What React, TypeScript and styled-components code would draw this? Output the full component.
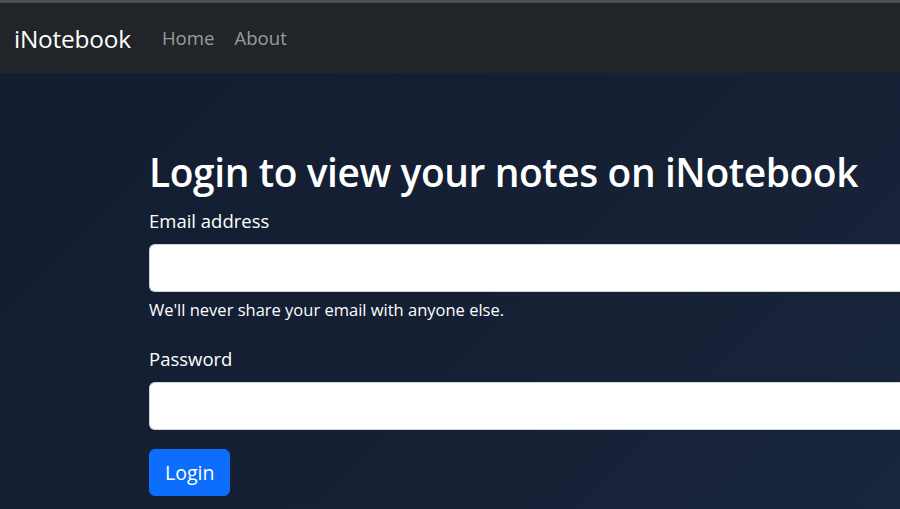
import React from "react";
import styled, { createGlobalStyle } from "styled-components";

const Global = createGlobalStyle`
  html, body { margin: 0; padding: 0; }
  body {
    width: 900px;
    height: 509px;
    overflow: hidden;
    font-family: "Open Sans", "Noto Sans", sans-serif;
    background: linear-gradient(135deg, #121d30 0%, #152035 55%, #19253a 100%);
    color: #fff;
  }
  * { box-sizing: border-box; }
`;

const Page = styled.div`
  display: flex;
  flex-direction: column;
  width: 900px;
  min-height: 509px;
`;

const Navbar = styled.nav`
  height: 73px;
  background: #212529;
  border-top: 3px solid #4d4e50;
  display: flex;
  align-items: center;
  padding: 0 14px;
`;

const Brand = styled.a`
  font-size: 24.4px;
  color: #fff;
  text-decoration: none;
  margin-right: 21px;
  letter-spacing: -0.2px;
`;

const NavLink = styled.a`
  font-size: 18.6px;
  color: rgba(255, 255, 255, 0.55);
  text-decoration: none;
  padding: 0 10px 1px;
`;

const Main = styled.main`
  padding: 74px 0 0 149px;
  display: flex;
  flex-direction: column;
  align-items: stretch;
`;

const Heading = styled.h1`
  margin: 0 0 10px;
  font-size: 38.9px;
  font-weight: 600;
  line-height: 49px;
  color: #fff;
  letter-spacing: -0.4px;
  white-space: nowrap;
`;

const Field = styled.div<{ $gap: number }>`
  display: flex;
  flex-direction: column;
  margin-bottom: ${(p) => p.$gap}px;
`;

const Label = styled.label`
  font-size: 18.5px;
  line-height: 30px;
  margin-bottom: 8px;
  color: #fff;
`;

const Input = styled.input`
  width: 100%;
  height: 48px;
  border: 1px solid #ced4da;
  border-right: none;
  border-radius: 6px 0 0 6px;
  background: #fff;
  font-size: 20px;
  padding: 7px 15px;
  outline: none;
`;

const Help = styled.div`
  margin-top: 5px;
  font-size: 16.5px;
  line-height: 26px;
  color: #fff;
`;

const Actions = styled.div`
  display: flex;
`;

const Button = styled.button`
  height: 47px;
  padding: 0 15px;
  background: #0d6efd;
  border: 1px solid #0d6efd;
  border-radius: 6px;
  color: #fff;
  font-family: inherit;
  font-size: 19.5px;
  line-height: 30px;
`;

export default function App() {
  return (
    <Page>
      <Global />
      <Navbar>
        <Brand href="#">iNotebook</Brand>
        <NavLink href="#">Home</NavLink>
        <NavLink href="#">About</NavLink>
      </Navbar>
      <Main>
        <Heading>Login to view your notes on iNotebook</Heading>
        <Field $gap={21}>
          <Label htmlFor="email">Email address</Label>
          <Input id="email" type="email" />
          <Help>We'll never share your email with anyone else.</Help>
        </Field>
        <Field $gap={19}>
          <Label htmlFor="password">Password</Label>
          <Input id="password" type="password" />
        </Field>
        <Actions>
          <Button type="submit">Login</Button>
        </Actions>
      </Main>
    </Page>
  );
}
